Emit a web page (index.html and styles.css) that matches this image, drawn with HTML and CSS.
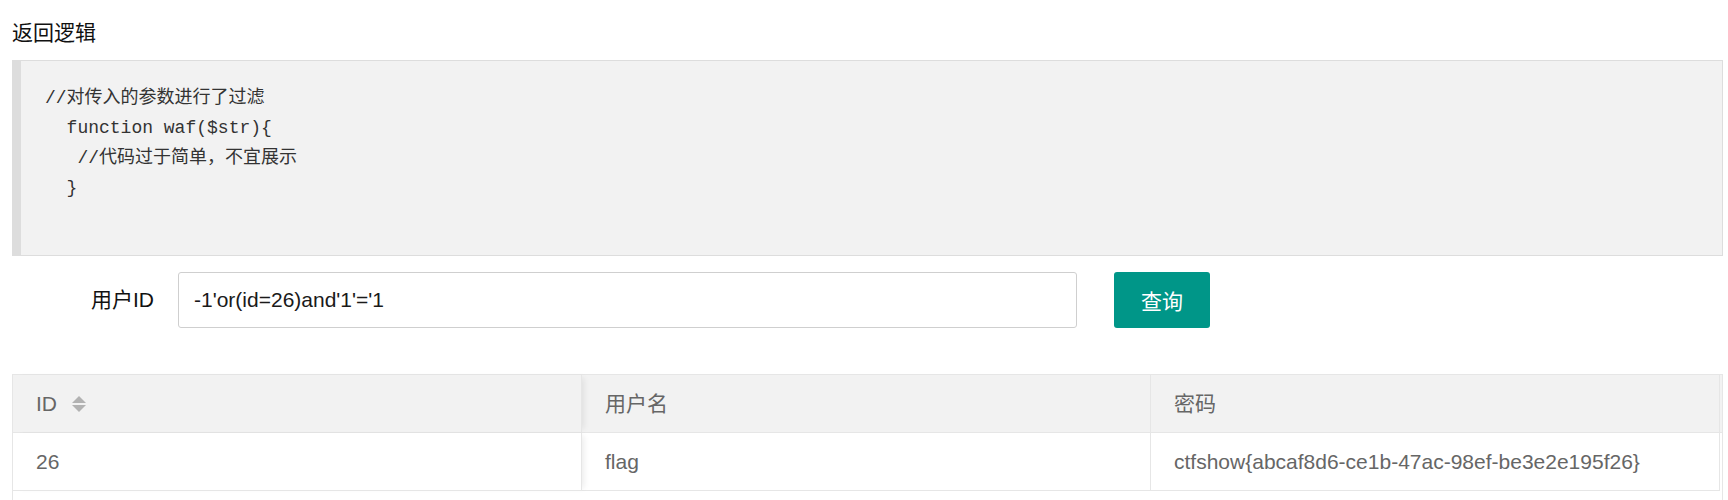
FILE: index.html
```html
<!DOCTYPE html>
<html lang="zh-CN">
<head>
<meta charset="utf-8">
<title>返回逻辑</title>
<link rel="stylesheet" href="styles.css">
</head>
<body>
<div class="page">
  <div class="title">返回逻辑</div>
  <pre class="code">//对传入的参数进行了过滤
  function waf($str){
   //代码过于简单，不宜展示
  }</pre>
  <div class="form-row">
    <label class="form-label">用户ID</label>
    <div class="input">-1'or(id=26)and'1'='1</div>
    <button class="btn">查询</button>
  </div>
  <div class="table">
    <div class="row head">
      <div class="cell fixed">ID <svg class="sort" width="14" height="16" viewBox="0 0 14 16"><polygon points="0,7 7,0 14,7" fill="#b2b2b2"/><polygon points="0,9 14,9 7,16" fill="#b2b2b2"/></svg></div>
      <div class="cell">用户名</div>
      <div class="cell">密码</div>
      <div class="patch"></div>
    </div>
    <div class="row body">
      <div class="cell fixed">26</div>
      <div class="cell">flag</div>
      <div class="cell">ctfshow{abcaf8d6-ce1b-47ac-98ef-be3e2e195f26}</div>
    </div>
  </div>
</div>
</body>
</html>
```
FILE: styles.css
```css
html, body {
  margin: 0;
  padding: 0;
  background: #fff;
}
body {
  font-family: "Liberation Sans", Arial, "Noto Sans CJK SC", sans-serif;
  font-size: 21px;
  color: #333;
}
.page {
  padding: 0 5px 0 12px;
}
.title {
  padding-top: 18px;
  line-height: 30px;
  height: 30px;
  margin-bottom: 12px;
  color: #111;
  font-size: 21px;
}
.code {
  margin: 0;
  border: 1px solid #dddddd;
  border-left: 9px solid #dddddd;
  background: #f2f2f2;
  padding: 22px 22px 52px 24px;
  font-family: "Liberation Mono", "Courier New", "Noto Sans CJK SC", monospace;
  font-size: 18px;
  line-height: 30px;
  color: #333;
  white-space: pre;
}
.form-row {
  margin-top: 16px;
  display: flex;
  align-items: center;
  height: 56px;
}
.form-label {
  width: 166px;
  box-sizing: border-box;
  padding-right: 24px;
  text-align: right;
  color: #111;
  line-height: 56px;
}
.input {
  width: 899px;
  height: 56px;
  box-sizing: border-box;
  border: 1px solid #cfcfcf;
  border-radius: 3px;
  padding-left: 15px;
  line-height: 54px;
  color: #1a1a1a;
  background: #fff;
}
.btn {
  margin-left: 37px;
  width: 96px;
  height: 56px;
  border: none;
  border-radius: 3px;
  background: #009688;
  color: #fff;
  font-family: inherit;
  font-size: 21px;
  padding: 0;
}
.table {
  margin-top: 46px;
  border: 1px solid #e6e6e6;
  border-bottom: none;
  height: 140px;
  box-sizing: border-box;
  color: #666;
}
.row {
  display: grid;
  grid-template-columns: 569px 569px 569px 1fr;
}
.head {
  background: #f2f2f2;
  border-bottom: 1px solid #e6e6e6;
}
.body .cell {
  border-bottom: 1px solid #e6e6e6;
}
.cell {
  height: 57px;
  line-height: 57px;
  padding: 0 23px;
  border-right: 1px solid #e6e6e6;
  white-space: nowrap;
  display: flex;
  align-items: center;
}
.fixed {
  position: relative;
  z-index: 1;
  box-shadow: 5px 0 6px -3px rgba(0, 0, 0, 0.08);
}
.head .fixed {
  background: #f2f2f2;
}
.body .fixed {
  background: #fff;
}
.sort {
  margin-left: 15px;
  display: block;
}
.patch {
  background: #f2f2f2;
}
```
